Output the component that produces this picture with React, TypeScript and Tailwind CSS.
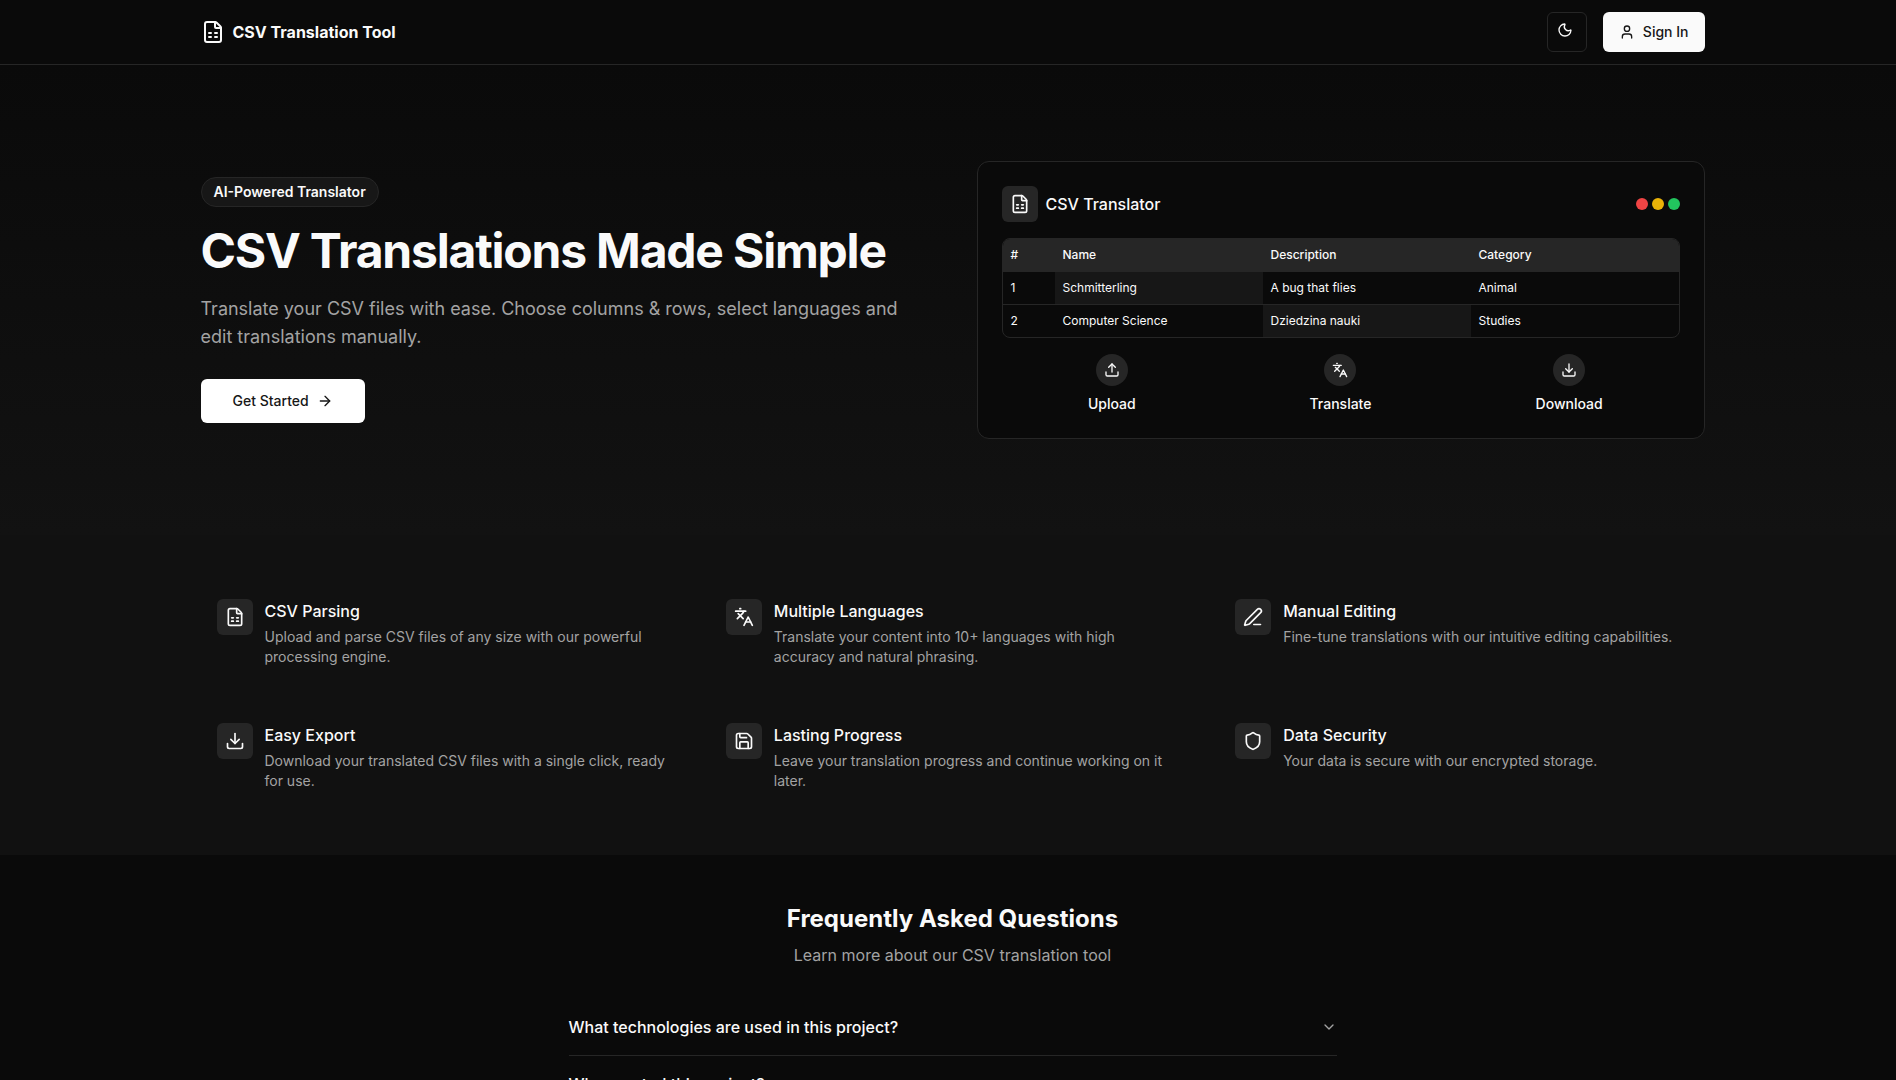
import {
  ArrowRight,
  ChevronDown,
  Download,
  FileSpreadsheet,
  Languages,
  Moon,
  PenLine,
  Save,
  Shield,
  Upload,
  User,
} from 'lucide-react'

const features = [
  {
    icon: FileSpreadsheet,
    title: 'CSV Parsing',
    text: 'Upload and parse CSV files of any size with our powerful processing engine.',
  },
  {
    icon: Languages,
    title: 'Multiple Languages',
    text: 'Translate your content into 10+ languages with high accuracy and natural phrasing.',
  },
  {
    icon: PenLine,
    title: 'Manual Editing',
    text: 'Fine-tune translations with our intuitive editing capabilities.',
  },
  {
    icon: Download,
    title: 'Easy Export',
    text: 'Download your translated CSV files with a single click, ready for use.',
  },
  {
    icon: Save,
    title: 'Lasting Progress',
    text: 'Leave your translation progress and continue working on it later.',
  },
  {
    icon: Shield,
    title: 'Data Security',
    text: 'Your data is secure with our encrypted storage.',
  },
]

const rows = [
  { id: '1', name: 'Schmitterling', description: 'A bug that flies', category: 'Animal', mark: 'name' },
  { id: '2', name: 'Computer Science', description: 'Dziedzina nauki', category: 'Studies', mark: 'description' },
]

const steps = [
  { icon: Upload, label: 'Upload' },
  { icon: Languages, label: 'Translate' },
  { icon: Download, label: 'Download' },
]

const questions = ['What technologies are used in this project?', 'Who created this project?']

const Header = () => (
  <header className="h-[65px] border-b border-[#262626]">
    <div className="mx-auto flex h-16 max-w-[1504px] items-center justify-between">
      <div className="flex items-center gap-2">
        <FileSpreadsheet className="h-6 w-6" />
        <span className="font-bold">CSV Translation Tool</span>
      </div>
      <div className="flex items-center gap-4">
        <button className="flex h-10 w-10 items-center justify-center rounded-md border border-[#262626]">
          <Moon className="h-4 w-4 -translate-x-0.5 -translate-y-0.5" />
        </button>
        <button className="flex h-10 items-center gap-2 rounded-md bg-[#fafafa] px-4 text-sm font-medium text-[#171717]">
          <User className="h-4 w-4" />
          Sign In
        </button>
      </div>
    </div>
  </header>
)

const TranslatorCard = () => (
  <div className="rounded-xl border border-[#262626] bg-[#0a0a0a] p-6">
    <div className="mb-4 flex items-center justify-between">
      <div className="flex items-center gap-2">
        <div className="flex h-9 w-9 items-center justify-center rounded-md bg-[#262626]">
          <FileSpreadsheet className="h-5 w-5" />
        </div>
        <span className="font-medium">CSV Translator</span>
      </div>
      <div className="flex gap-1">
        <div className="h-3 w-3 rounded-full bg-[#ef4444]" />
        <div className="h-3 w-3 rounded-full bg-[#eab308]" />
        <div className="h-3 w-3 rounded-full bg-[#22c55e]" />
      </div>
    </div>

    {/* TABLE */}
    <div className="overflow-hidden rounded-lg border border-[#262626] text-xs">
      <div className="grid grid-cols-[52px_1fr_1fr_1fr] border-b border-[#262626] bg-[#262626] font-medium">
        <div className="p-2">#</div>
        <div className="p-2">Name</div>
        <div className="p-2">Description</div>
        <div className="p-2">Category</div>
      </div>
      {rows.map((row, i) => (
        <div
          key={row.id}
          className={`grid grid-cols-[52px_1fr_1fr_1fr] ${i > 0 ? 'border-t border-[#262626]' : ''}`}
        >
          <div className="p-2">{row.id}</div>
          <div className={`p-2 ${row.mark === 'name' ? 'bg-[#171717]' : ''}`}>{row.name}</div>
          <div className={`p-2 ${row.mark === 'description' ? 'bg-[#171717]' : ''}`}>{row.description}</div>
          <div className="p-2">{row.category}</div>
        </div>
      ))}
    </div>

    <div className="mt-4 grid grid-cols-3 gap-2">
      {steps.map((step) => (
        <div key={step.label} className="flex flex-col items-center gap-2">
          <div className="flex h-8 w-8 items-center justify-center rounded-full bg-[#262626]">
            <step.icon className="h-4 w-4" />
          </div>
          <span className="text-sm font-medium">{step.label}</span>
        </div>
      ))}
    </div>
  </div>
)

const App = () => {
  return (
    <div className="h-screen w-full overflow-hidden bg-[#0a0a0a] font-['Inter',sans-serif] text-[#fafafa]">
      <div className="w-[1905px]">
        <Header />

        {/* HERO */}
        <section className="bg-gradient-to-b from-[#0a0a0a] to-[#121212] py-24">
          <div className="mx-auto grid max-w-[1504px] grid-cols-2 items-center gap-12">
            <div>
              <span className="block w-fit rounded-full border border-[#262626] bg-[#171717] px-3 py-1 text-sm font-semibold">
                AI-Powered Translator
              </span>
              <h1 className="mt-5 text-5xl font-bold tracking-tight">CSV Translations Made Simple</h1>
              <p className="mt-5 text-lg text-[#a3a3a3]">
                Translate your CSV files with ease. Choose columns &amp; rows, select languages and edit translations
                manually.
              </p>
              <button className="mt-7 flex h-11 items-center gap-2 rounded-md bg-white px-8 text-sm font-medium text-[#171717]">
                Get Started
                <ArrowRight className="h-4 w-4" />
              </button>
            </div>
            <TranslatorCard />
          </div>
        </section>

        {/* FEATURES */}
        <section className="bg-[#111111] py-12">
          <div className="mx-auto grid max-w-[1504px] grid-cols-3 gap-6">
            {features.map((feature) => (
              <div key={feature.title} className="flex gap-3 p-4">
                <div className="flex h-9 w-9 shrink-0 items-center justify-center rounded-md bg-[#262626]">
                  <feature.icon className="h-5 w-5" />
                </div>
                <div>
                  <h3 className="mb-1 font-medium">{feature.title}</h3>
                  <p className="text-sm text-[#a3a3a3]">{feature.text}</p>
                </div>
              </div>
            ))}
          </div>
        </section>

        {/* FAQ */}
        <section className="py-12">
          <div className="mb-8 text-center">
            <h2 className="text-2xl font-bold">Frequently Asked Questions</h2>
            <p className="mt-2 text-[#a3a3a3]">Learn more about our CSV translation tool</p>
          </div>
          <div className="mx-auto max-w-3xl">
            {questions.map((q) => (
              <div key={q} className="flex items-center justify-between border-b border-[#262626] py-4 font-medium">
                {q}
                <ChevronDown className="h-4 w-4 text-[#a3a3a3]" />
              </div>
            ))}
          </div>
        </section>
      </div>
    </div>
  )
}

export default App
